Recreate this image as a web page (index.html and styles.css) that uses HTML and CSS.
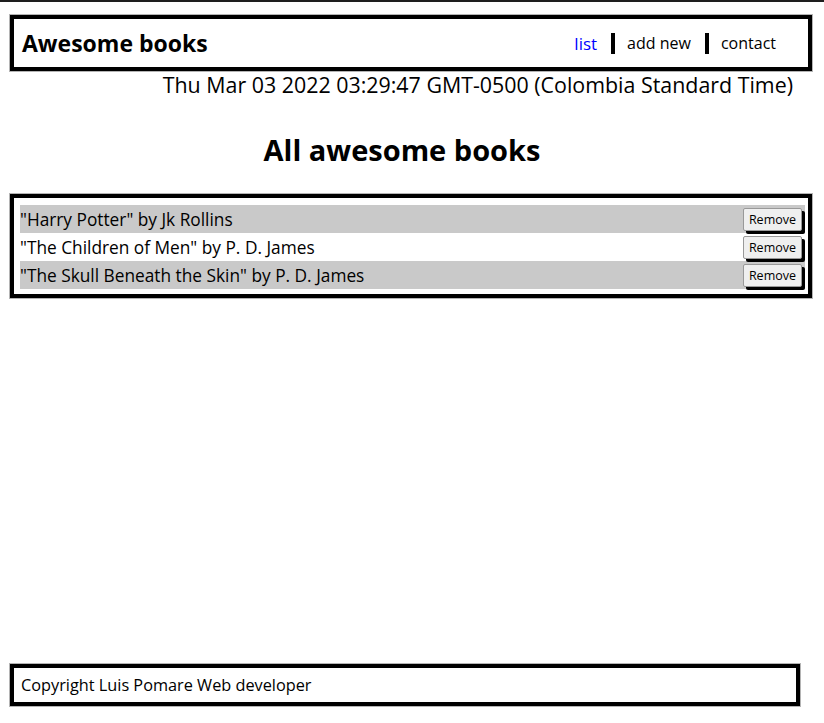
FILE: index.html
```html
<!DOCTYPE html>
<html lang="en">
<head>
    <meta charset="UTF-8">
    <meta name="viewport" content="width=device-width, initial-scale=1.0">
    <title>Awesome books</title>
    <link rel="stylesheet" href="styles.css">
</head>
<body>
    <header class="topbar">
        <h2 class="logo">Awesome books</h2>
        <nav>
            <ul class="menu">
                <li><a href="#list" class="active">list</a></li>
                <li class="sep"></li>
                <li><a href="#add">add new</a></li>
                <li class="sep"></li>
                <li><a href="#contact">contact</a></li>
            </ul>
        </nav>
    </header>
    <p class="date">Thu Mar 03 2022 03:29:47 GMT-0500 (Colombia Standard Time)</p>

    <main class="list-section">
        <h1 class="title">All awesome books</h1>
        <div class="book-list">
            <div class="book">
                <p>"Harry Potter" by Jk Rollins</p>
                <button class="remove-btn">Remove</button>
            </div>
            <div class="book">
                <p>"The Children of Men" by P. D. James</p>
                <button class="remove-btn">Remove</button>
            </div>
            <div class="book">
                <p>"The Skull Beneath the Skin" by P. D. James</p>
                <button class="remove-btn">Remove</button>
            </div>
        </div>
    </main>

    <footer class="footer">
        <p>Copyright Luis Pomare Web developer</p>
    </footer>
</body>
</html>
```

FILE: styles.css
```css
body {
    font-family: 'Comic Sans MS', 'Open Sans', sans-serif;
    color: black;
    background: white;
    margin: 0;
    border-top: 2px solid #1e1e1e;
    min-height: calc(100vh - 2px);
    display: flex;
    flex-direction: column;
}
p, h1, h2, ul {
    margin: 0;
}
.topbar {
    display: flex;
    justify-content: space-between;
    align-items: center;
    margin: 13px 12px 0 10px;
    height: 48px;
    padding: 0 8px;
    border: 4px solid black;
    box-shadow: 0 0 0 1px #b4b4b4;
}
.logo {
    font-size: 23px;
    font-weight: bold;
}
.menu {
    list-style: none;
    padding: 0;
    display: flex;
    align-items: center;
    margin-right: 24px;
}
.menu a {
    color: black;
    text-decoration: none;
    font-size: 16px;
}
.menu a.active {
    color: blue;
    font-size: 17px;
}
.sep {
    width: 4px;
    height: 21px;
    background: black;
    margin: 0 12px 0 14px;
}
.date {
    text-align: right;
    font-size: 21.4px;
    line-height: 24px;
    margin: 2px 31px 0 0;
}
.title {
    text-align: center;
    font-size: 29px;
    font-weight: bold;
    margin: 35px 20px 26px 0;
    line-height: 36px;
}
.book-list {
    margin: 0 12px 0 10px;
    border: 4px solid black;
    box-shadow: 0 0 0 1px #b4b4b4;
    padding: 7px 3px 5px 6px;
}
.book {
    display: flex;
    justify-content: space-between;
    align-items: center;
    height: 28px;
}
.book:nth-child(odd) {
    background: #c9c9c9;
}
.book p {
    font-size: 17.3px;
}
.remove-btn {
    font-family: inherit;
    font-size: 12.5px;
    padding: 1px 5px;
    height: 23px;
    background: #efefef;
    border: 1px solid #999;
    border-radius: 2px;
    box-shadow: 3px 3px 0 black;
    margin-right: 3px;
}
.footer {
    margin: auto 24px 17px 10px;
    border: 4px solid black;
    box-shadow: 0 0 0 1px #b4b4b4;
    height: 34px;
    display: flex;
    align-items: center;
    padding: 0 7px;
}
.footer p {
    font-size: 16.3px;
}
```
